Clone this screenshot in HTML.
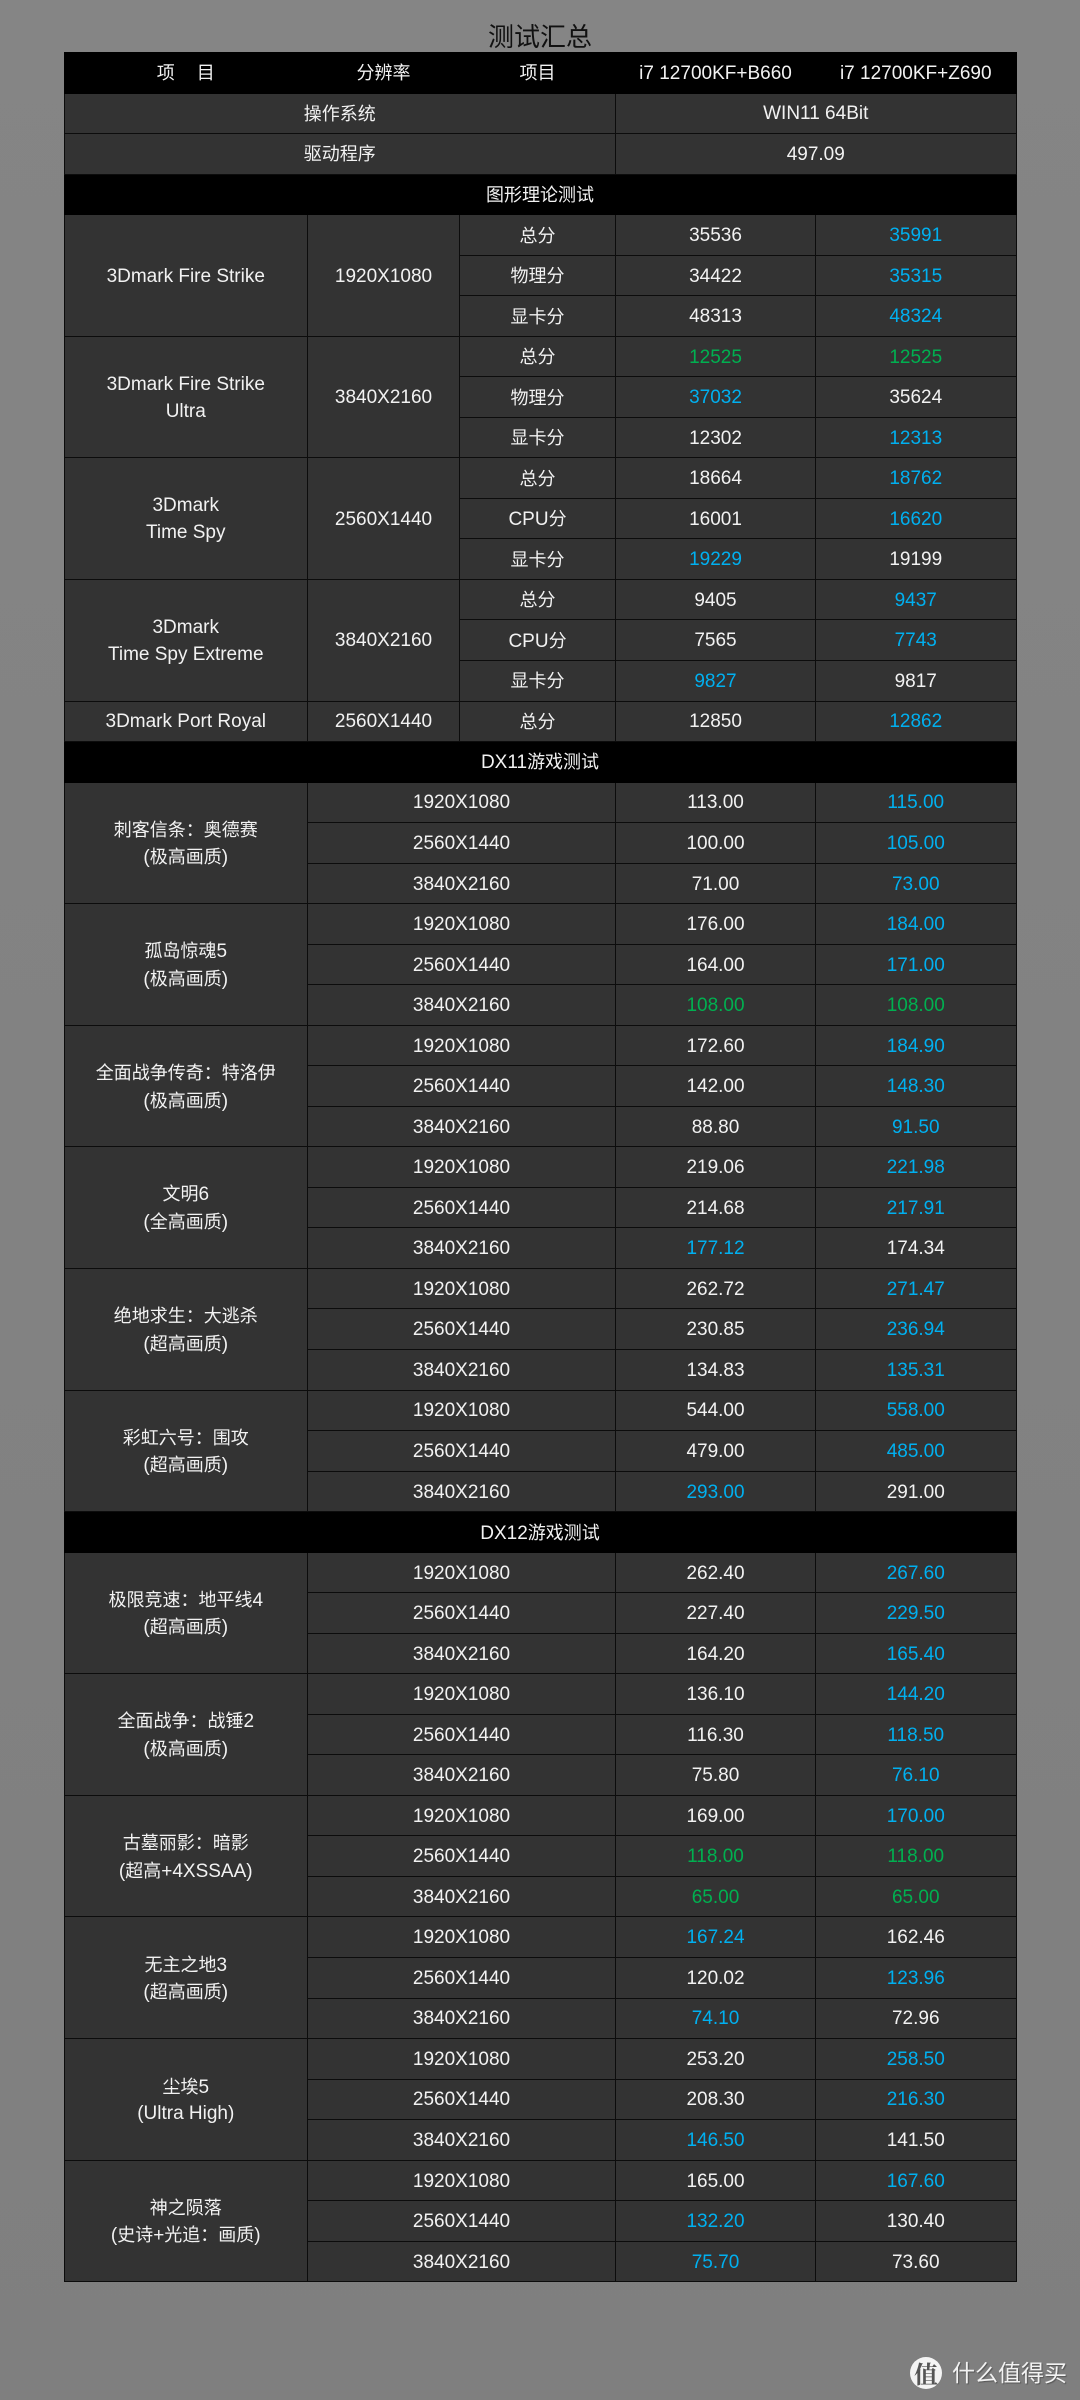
<!DOCTYPE html>
<html lang="zh-CN"><head><meta charset="utf-8"><title>测试汇总</title>
<style>
html,body{margin:0;padding:0;width:1080px;height:2400px;overflow:hidden;background:linear-gradient(#858585,#7f7f7f)}
body{position:relative;font-family:"Liberation Sans","Noto Sans CJK SC",sans-serif}
h1{position:absolute;left:0;top:20px;width:1080px;margin:0;text-align:center;font-weight:400;font-size:26px;line-height:34px;color:#111}
table{position:absolute;left:63.5px;top:52px;width:952px;table-layout:fixed;border-collapse:collapse;font-size:19px;color:#f2f2f2}
td{background:#333;border:1.5px solid #0c0c0c;height:40.54px;padding:3px 0 0;text-align:center;vertical-align:middle;line-height:26.7px;box-sizing:border-box;white-space:nowrap}
tr.k td{background:#000;border-color:#000}
i{font-style:normal;font-size:18px}
.b{color:#00b0f0}.g{color:#00b050}
.wm{position:absolute;left:910px;top:2357px;width:32px;height:32px;border-radius:50%;background:#f4f4f4;color:#555;font:700 24px/32px "Noto Serif CJK SC",serif;text-align:center}
.wt{position:absolute;left:952px;top:2357px;font-size:23px;line-height:32px;color:#f2f2f2;text-shadow:1px 1px 1px #555;white-space:nowrap}
</style></head><body>
<h1>测试汇总</h1>
<table>
<colgroup><col style="width:243.5px"><col style="width:152px"><col style="width:156px"><col style="width:200px"><col style="width:200.5px"></colgroup>
<tr class="k"><td><i>项<span style="margin-left:22px">目</span></i></td><td><i>分辨率</i></td><td><i>项目</i></td><td>i7 12700KF+B660</td><td>i7 12700KF+Z690</td></tr>
<tr><td colspan="3"><i>操作系统</i></td><td colspan="2">WIN11 64Bit</td></tr>
<tr><td colspan="3"><i>驱动程序</i></td><td colspan="2">497.09</td></tr>
<tr class="k"><td colspan="5"><i>图形理论测试</i></td></tr>
<tr><td rowspan="3">3Dmark Fire Strike</td><td rowspan="3">1920X1080</td><td><i>总分</i></td><td>35536</td><td class="b">35991</td></tr>
<tr><td><i>物理分</i></td><td>34422</td><td class="b">35315</td></tr>
<tr><td><i>显卡分</i></td><td>48313</td><td class="b">48324</td></tr>
<tr><td rowspan="3">3Dmark Fire Strike<br>Ultra</td><td rowspan="3">3840X2160</td><td><i>总分</i></td><td class="g">12525</td><td class="g">12525</td></tr>
<tr><td><i>物理分</i></td><td class="b">37032</td><td>35624</td></tr>
<tr><td><i>显卡分</i></td><td>12302</td><td class="b">12313</td></tr>
<tr><td rowspan="3">3Dmark<br>Time Spy</td><td rowspan="3">2560X1440</td><td><i>总分</i></td><td>18664</td><td class="b">18762</td></tr>
<tr><td>CPU<i>分</i></td><td>16001</td><td class="b">16620</td></tr>
<tr><td><i>显卡分</i></td><td class="b">19229</td><td>19199</td></tr>
<tr><td rowspan="3">3Dmark<br>Time Spy Extreme</td><td rowspan="3">3840X2160</td><td><i>总分</i></td><td>9405</td><td class="b">9437</td></tr>
<tr><td>CPU<i>分</i></td><td>7565</td><td class="b">7743</td></tr>
<tr><td><i>显卡分</i></td><td class="b">9827</td><td>9817</td></tr>
<tr><td>3Dmark Port Royal</td><td>2560X1440</td><td><i>总分</i></td><td>12850</td><td class="b">12862</td></tr>
<tr class="k"><td colspan="5">DX11<i>游戏测试</i></td></tr>
<tr><td rowspan="3"><i>刺客信条：奥德赛</i><br>(<i>极高画质</i>)</td><td colspan="2">1920X1080</td><td>113.00</td><td class="b">115.00</td></tr>
<tr><td colspan="2">2560X1440</td><td>100.00</td><td class="b">105.00</td></tr>
<tr><td colspan="2">3840X2160</td><td>71.00</td><td class="b">73.00</td></tr>
<tr><td rowspan="3"><i>孤岛惊魂</i>5<br>(<i>极高画质</i>)</td><td colspan="2">1920X1080</td><td>176.00</td><td class="b">184.00</td></tr>
<tr><td colspan="2">2560X1440</td><td>164.00</td><td class="b">171.00</td></tr>
<tr><td colspan="2">3840X2160</td><td class="g">108.00</td><td class="g">108.00</td></tr>
<tr><td rowspan="3"><i>全面战争传奇：特洛伊</i><br>(<i>极高画质</i>)</td><td colspan="2">1920X1080</td><td>172.60</td><td class="b">184.90</td></tr>
<tr><td colspan="2">2560X1440</td><td>142.00</td><td class="b">148.30</td></tr>
<tr><td colspan="2">3840X2160</td><td>88.80</td><td class="b">91.50</td></tr>
<tr><td rowspan="3"><i>文明</i>6<br>(<i>全高画质</i>)</td><td colspan="2">1920X1080</td><td>219.06</td><td class="b">221.98</td></tr>
<tr><td colspan="2">2560X1440</td><td>214.68</td><td class="b">217.91</td></tr>
<tr><td colspan="2">3840X2160</td><td class="b">177.12</td><td>174.34</td></tr>
<tr><td rowspan="3"><i>绝地求生：大逃杀</i><br>(<i>超高画质</i>)</td><td colspan="2">1920X1080</td><td>262.72</td><td class="b">271.47</td></tr>
<tr><td colspan="2">2560X1440</td><td>230.85</td><td class="b">236.94</td></tr>
<tr><td colspan="2">3840X2160</td><td>134.83</td><td class="b">135.31</td></tr>
<tr><td rowspan="3"><i>彩虹六号：围攻</i><br>(<i>超高画质</i>)</td><td colspan="2">1920X1080</td><td>544.00</td><td class="b">558.00</td></tr>
<tr><td colspan="2">2560X1440</td><td>479.00</td><td class="b">485.00</td></tr>
<tr><td colspan="2">3840X2160</td><td class="b">293.00</td><td>291.00</td></tr>
<tr class="k"><td colspan="5">DX12<i>游戏测试</i></td></tr>
<tr><td rowspan="3"><i>极限竞速：地平线</i>4<br>(<i>超高画质</i>)</td><td colspan="2">1920X1080</td><td>262.40</td><td class="b">267.60</td></tr>
<tr><td colspan="2">2560X1440</td><td>227.40</td><td class="b">229.50</td></tr>
<tr><td colspan="2">3840X2160</td><td>164.20</td><td class="b">165.40</td></tr>
<tr><td rowspan="3"><i>全面战争：战锤</i>2<br>(<i>极高画质</i>)</td><td colspan="2">1920X1080</td><td>136.10</td><td class="b">144.20</td></tr>
<tr><td colspan="2">2560X1440</td><td>116.30</td><td class="b">118.50</td></tr>
<tr><td colspan="2">3840X2160</td><td>75.80</td><td class="b">76.10</td></tr>
<tr><td rowspan="3"><i>古墓丽影：暗影</i><br>(<i>超高</i>+4XSSAA)</td><td colspan="2">1920X1080</td><td>169.00</td><td class="b">170.00</td></tr>
<tr><td colspan="2">2560X1440</td><td class="g">118.00</td><td class="g">118.00</td></tr>
<tr><td colspan="2">3840X2160</td><td class="g">65.00</td><td class="g">65.00</td></tr>
<tr><td rowspan="3"><i>无主之地</i>3<br>(<i>超高画质</i>)</td><td colspan="2">1920X1080</td><td class="b">167.24</td><td>162.46</td></tr>
<tr><td colspan="2">2560X1440</td><td>120.02</td><td class="b">123.96</td></tr>
<tr><td colspan="2">3840X2160</td><td class="b">74.10</td><td>72.96</td></tr>
<tr><td rowspan="3"><i>尘埃</i>5<br>(Ultra High)</td><td colspan="2">1920X1080</td><td>253.20</td><td class="b">258.50</td></tr>
<tr><td colspan="2">2560X1440</td><td>208.30</td><td class="b">216.30</td></tr>
<tr><td colspan="2">3840X2160</td><td class="b">146.50</td><td>141.50</td></tr>
<tr><td rowspan="3"><i>神之陨落</i><br>(<i>史诗</i>+<i>光追：画质</i>)</td><td colspan="2">1920X1080</td><td>165.00</td><td class="b">167.60</td></tr>
<tr><td colspan="2">2560X1440</td><td class="b">132.20</td><td>130.40</td></tr>
<tr><td colspan="2">3840X2160</td><td class="b">75.70</td><td>73.60</td></tr>
</table>
<div class="wm">值</div>
<div class="wt">什么值得买</div>
</body></html>
